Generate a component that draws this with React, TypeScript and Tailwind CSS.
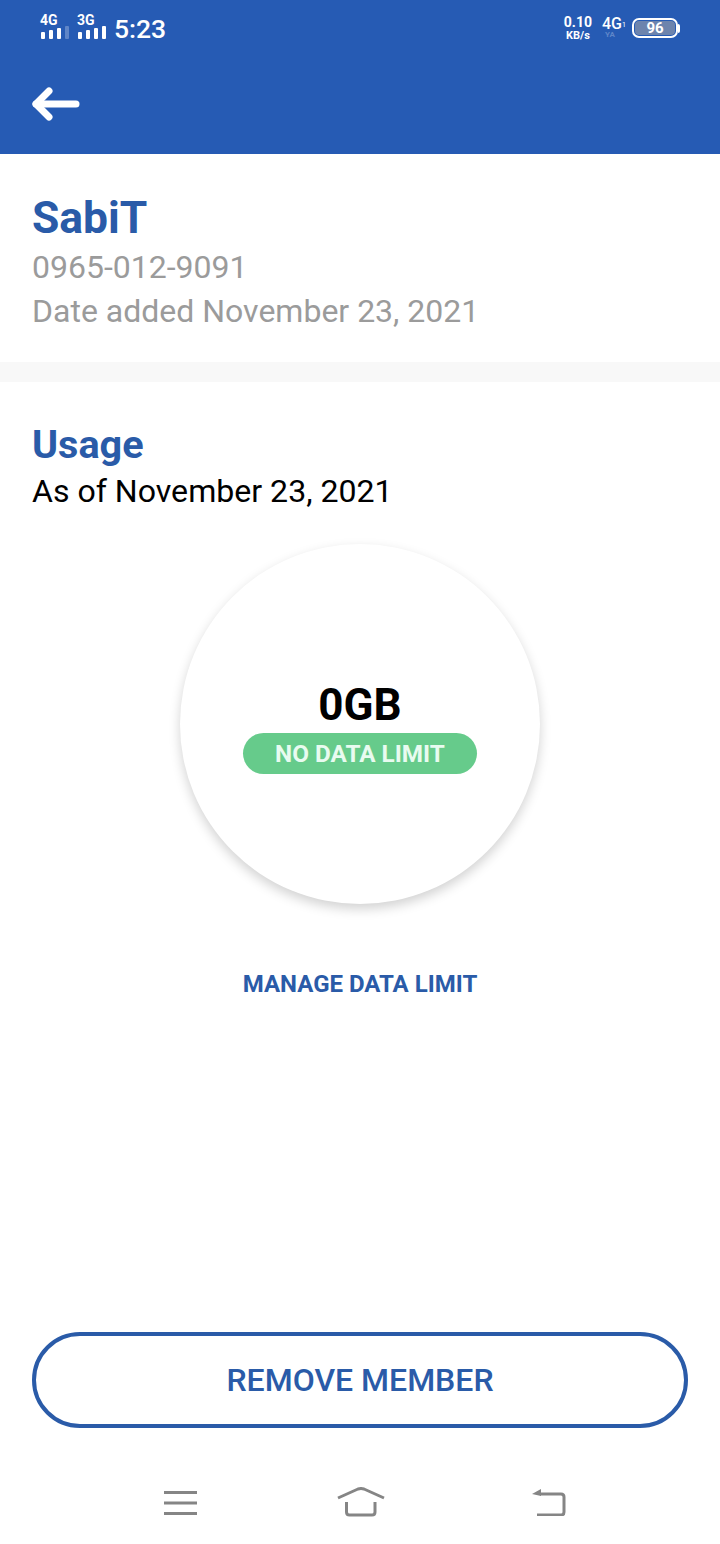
import React from 'react';

function Bars({ dim }: { dim?: boolean }) {
  return (
    <div className="flex items-end gap-[4px] pl-[1px]">
      <div className="h-[7px] w-[4px] rounded-[1px] bg-white" />
      <div className="h-[9px] w-[4px] rounded-[1px] bg-white" />
      <div className="h-[11px] w-[4px] rounded-[1px] bg-white" />
      <div className={`h-[13px] w-[4px] rounded-[1px] ${dim ? 'bg-[#5f86c8]' : 'bg-white'}`} />
    </div>
  );
}

function Signal({ label, dim }: { label: string; dim?: boolean }) {
  return (
    <div className="flex flex-col items-start">
      <span className="text-[14px] leading-[12px] font-bold text-white">{label}</span>
      <Bars dim={dim} />
    </div>
  );
}

function StatusBar() {
  return (
    <div className="flex h-[54px] items-start justify-between px-[40px] pt-[14px]">
      <div className="flex items-start">
        <Signal label="4G" dim />
        <div className="ml-[8px]">
          <Signal label="3G" />
        </div>
        <span className="ml-[8px] mt-[1px] text-[26.5px] leading-[28px] font-medium text-white">5:23</span>
      </div>
      <div className="flex items-start">
        <div className="mr-[10px] mt-[1px] flex flex-col items-center font-bold text-white">
          <span className="text-[14px] leading-[14px]">0.10</span>
          <span className="mt-[1px] text-[11px] leading-[11px]">KB/s</span>
        </div>
        <div className="relative mr-[6px] h-[28px] w-[24px] text-white">
          <span className="absolute left-0 top-0 text-[16px] leading-[20px] font-medium">4G</span>
          <span className="absolute right-0 top-[7px] text-[7px] leading-[8px]">1</span>
          <span className="absolute left-[3px] top-[17px] text-[8px] leading-[8px] font-bold text-[#5f86c8]">YA</span>
        </div>
        <div className="mt-[4px] flex items-center">
          <div className="h-[20px] w-[46px] rounded-[7px] border-[2px] border-white p-[1px]">
            <div className="flex h-full items-center justify-center rounded-[4px] bg-[#6d84ad]">
              <span className="text-[15px] leading-[14px] font-bold text-white">96</span>
            </div>
          </div>
          <div className="h-[9px] w-[2px] rounded-r-[2px] bg-white" />
        </div>
      </div>
    </div>
  );
}

export default function App() {
  return (
    <div className="flex h-[1544px] w-[720px] flex-col bg-white font-['Roboto',sans-serif]">
      <header className="h-[154px] bg-[#265bb4]">
        <StatusBar />
        <div className="pl-[32px] pt-[32px]">
          <svg className="block" width="48" height="36" viewBox="0 0 48 36" fill="none" stroke="white" strokeWidth="7" strokeLinecap="round" strokeLinejoin="round">
            <path d="M4 18H44" />
            <path d="M17 5L4 18L17 31" />
          </svg>
        </div>
      </header>

      <section className="h-[208px] px-[32px] pt-[38px]">
        <h1 className="text-[44.4px] leading-[52px] font-bold text-[#2a5ba8]">SabiT</h1>
        <p className="mt-[1px] text-[32px] leading-[44px] text-[#9b9b9b]">0965-012-9091</p>
        <p className="text-[32px] leading-[44px] text-[#9b9b9b]">Date added November 23, 2021</p>
      </section>

      <div className="h-[20px] bg-[#f8f8f8]" />

      <section className="flex flex-1 flex-col px-[32px] pt-[41px]">
        <h2 className="text-[39.6px] leading-[44px] font-bold text-[#2a5ba8]">Usage</h2>
        <p className="mt-[2px] text-[32.1px] leading-[44px] text-black">As of November 23, 2021</p>

        <div className="mt-[31px] flex h-[360px] w-[360px] flex-col items-center self-center rounded-full bg-white pt-[137px] shadow-[0_5px_12px_rgba(0,0,0,0.18)]">
          <span className="text-[44px] leading-[48px] font-bold text-black">0GB</span>
          <div className="mt-[4px] flex h-[41px] w-[234px] items-center justify-center rounded-full bg-[#66cb8b]">
            <span className="text-[24.3px] leading-[28px] font-bold text-[#e8fbf0]">NO DATA LIMIT</span>
          </div>
        </div>

        <p className="mt-[64px] text-center text-[24px] leading-[32px] font-bold text-[#2a5ba8]">MANAGE DATA LIMIT</p>

        <div className="mt-auto flex h-[96px] items-center justify-center rounded-full border-[4px] border-[#2a5ba8]">
          <span className="text-[32px] leading-[40px] font-medium text-[#2a5ba8]">REMOVE MEMBER</span>
        </div>

        <div className="flex h-[116px] items-start pl-[132px] pt-[59px]">
          <svg className="mt-[4px] block" width="33" height="24" viewBox="0 0 33 24" fill="none" stroke="#858585" strokeWidth="3">
            <path d="M0 1.5H33" />
            <path d="M0 12H33" />
            <path d="M0 22.5H33" />
          </svg>
          <svg className="ml-[140px] block" width="48" height="30" viewBox="0 0 48 30" fill="none" stroke="#858585" strokeWidth="3" strokeLinejoin="round">
            <path d="M1 11L21 2Q24 1 27 2L47 11" />
            <path d="M9.5 15V25Q9.5 28 12.5 28H35Q38 28 38 25V15" />
          </svg>
          <svg className="ml-[147px] mt-[1px] block" width="34" height="28" viewBox="0 0 34 28" fill="none" stroke="#858585" strokeWidth="3">
            <path d="M8 6H29Q32 6 32 9V24Q32 27 29 27H5" />
            <path d="M9 1L0 6L9 8Z" fill="#858585" stroke="none" />
          </svg>
        </div>
      </section>
    </div>
  );
}
